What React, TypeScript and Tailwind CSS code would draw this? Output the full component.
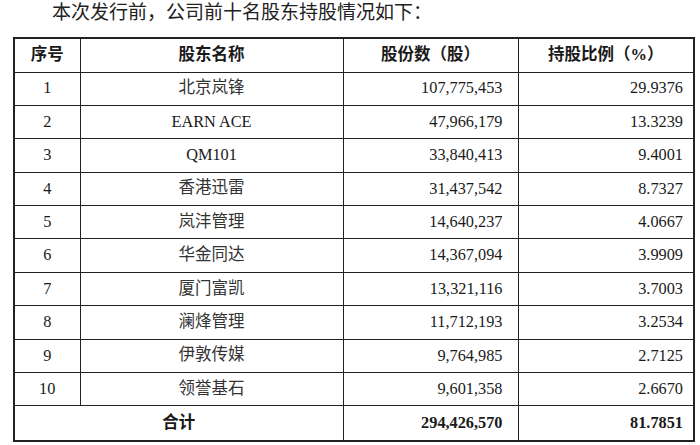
const rows = [
  { no: '1', name: '北京岚锋', shares: '107,775,453', ratio: '29.9376' },
  { no: '2', name: 'EARN ACE', shares: '47,966,179', ratio: '13.3239' },
  { no: '3', name: 'QM101', shares: '33,840,413', ratio: '9.4001' },
  { no: '4', name: '香港迅雷', shares: '31,437,542', ratio: '8.7327' },
  { no: '5', name: '岚沣管理', shares: '14,640,237', ratio: '4.0667' },
  { no: '6', name: '华金同达', shares: '14,367,094', ratio: '3.9909' },
  { no: '7', name: '厦门富凯', shares: '13,321,116', ratio: '3.7003' },
  { no: '8', name: '澜烽管理', shares: '11,712,193', ratio: '3.2534' },
  { no: '9', name: '伊敦传媒', shares: '9,764,985', ratio: '2.7125' },
  { no: '10', name: '领誉基石', shares: '9,601,358', ratio: '2.6670' },
]

const cell = 'border border-[#222] p-0'

// latin names use the number size, chinese ones run a bit larger
const isLatin = (s: string) => /^[\x00-\x7f]+$/.test(s)

export default function App() {
  return (
    <div
      className="w-[700px] h-[445px] bg-white text-[#1a1a1a] overflow-hidden"
      style={{ fontFamily: '"Liberation Serif", "Noto Sans CJK SC", serif' }}
    >
      <p className="pl-[52px] text-[19px] leading-[26px] text-[#222]">
        本次发行前，公司前十名股东持股情况如下：
      </p>

      <table className="ml-[13px] mt-[11px] w-[682px] table-fixed border-collapse border-2 border-[#222] text-[16.3px]">
        <colgroup>
          <col className="w-[66px]" />
          <col className="w-[263px]" />
          <col className="w-[175px]" />
          <col />
        </colgroup>
        <thead>
          <tr className="h-[34px] font-bold text-[16.5px]">
            <th className={cell + ' text-center'}>序号</th>
            <th className={cell + ' text-center'}>股东名称</th>
            <th className={cell + ' text-center'}>股份数（股）</th>
            <th className={cell + ' text-center'}>持股比例（%）</th>
          </tr>
        </thead>
        <tbody>
          {rows.map((r) => (
            <tr key={r.no} className="h-[33.4px]">
              <td className={cell + ' text-center'}>{r.no}</td>
              <td
                className={
                  cell + (isLatin(r.name) ? ' text-center' : ' text-center text-[16.5px] text-[#333]')
                }
              >
                {r.name}
              </td>
              <td className={cell + ' text-right pr-[15px]'}>{r.shares}</td>
              <td className={cell + ' text-right pr-[10px]'}>{r.ratio}</td>
            </tr>
          ))}
          <tr className="h-[35px] font-bold">
            <td colSpan={2} className={cell + ' text-center text-[16.5px]'}>合计</td>
            <td className={cell + ' text-right pr-[15px]'}>294,426,570</td>
            <td className={cell + ' text-right pr-[10px]'}>81.7851</td>
          </tr>
        </tbody>
      </table>
    </div>
  )
}
